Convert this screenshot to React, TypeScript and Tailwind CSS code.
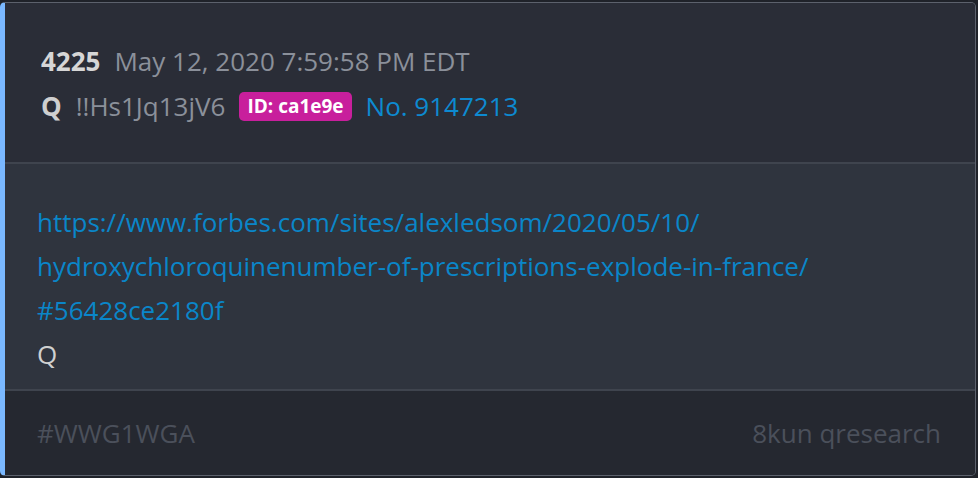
import React from 'react';

const url = [
  'https://www.forbes.com/sites/alexledsom/2020/05/10/',
  'hydroxychloroquinenumber-of-prescriptions-explode-in-france/',
  '#56428ce2180f',
];

export default function App() {
  return (
    <div className="w-[978px] h-[478px] bg-[#1f2229] pt-[2px] pr-[2px] pb-[2px]" style={{ fontFamily: '"Open Sans", "Noto Sans", sans-serif' }}>
      <div className="h-full flex flex-col rounded-[5px] border border-[#5c616c] border-l-[5px] border-l-[#7ab8ff] overflow-hidden">
        <div className="bg-[#2a2d37] h-[159px] pl-[36px] pt-[36px] flex flex-col">
          <div className="flex items-center gap-[14px] h-[45px] text-[26px]">
            <span className="font-bold text-[#d6d6d6]">4225</span>
            <span className="text-[#8b909a]">May 12, 2020 7:59:58 PM EDT</span>
          </div>
          <div className="flex items-center h-[45px] text-[26px]">
            <span className="font-bold text-[#cfcfcf]">Q</span>
            <span className="ml-[14px] text-[#8b909a]">!!Hs1Jq13jV6</span>
            <span className="ml-[14px] bg-[#c81f9c] text-white font-bold text-[19px] leading-[29px] px-[8px] rounded-[5px]">ID: ca1e9e</span>
            <span className="ml-[14px] text-[#0d8ad1]">No. 9147213</span>
          </div>
        </div>
        <div className="h-[2px] bg-[#3f444e]" />
        <div className="bg-[#2f343e] h-[225px] pl-[32px] pt-[36px] text-[26px] leading-[44px]">
          {url.map(l => (
            <div key={l} className="text-[#0a86c9]">{l}</div>
          ))}
          <div className="text-[#d0d0d0]">Q</div>
        </div>
        <div className="h-[2px] bg-[#3f444e]" />
        <div className="flex-1 bg-[#252830] flex items-center justify-between pl-[32px] pr-[34px] text-[26px] text-[#4b505b]">
          <span>#WWG1WGA</span>
          <span>8kun qresearch</span>
        </div>
      </div>
    </div>
  );
}
